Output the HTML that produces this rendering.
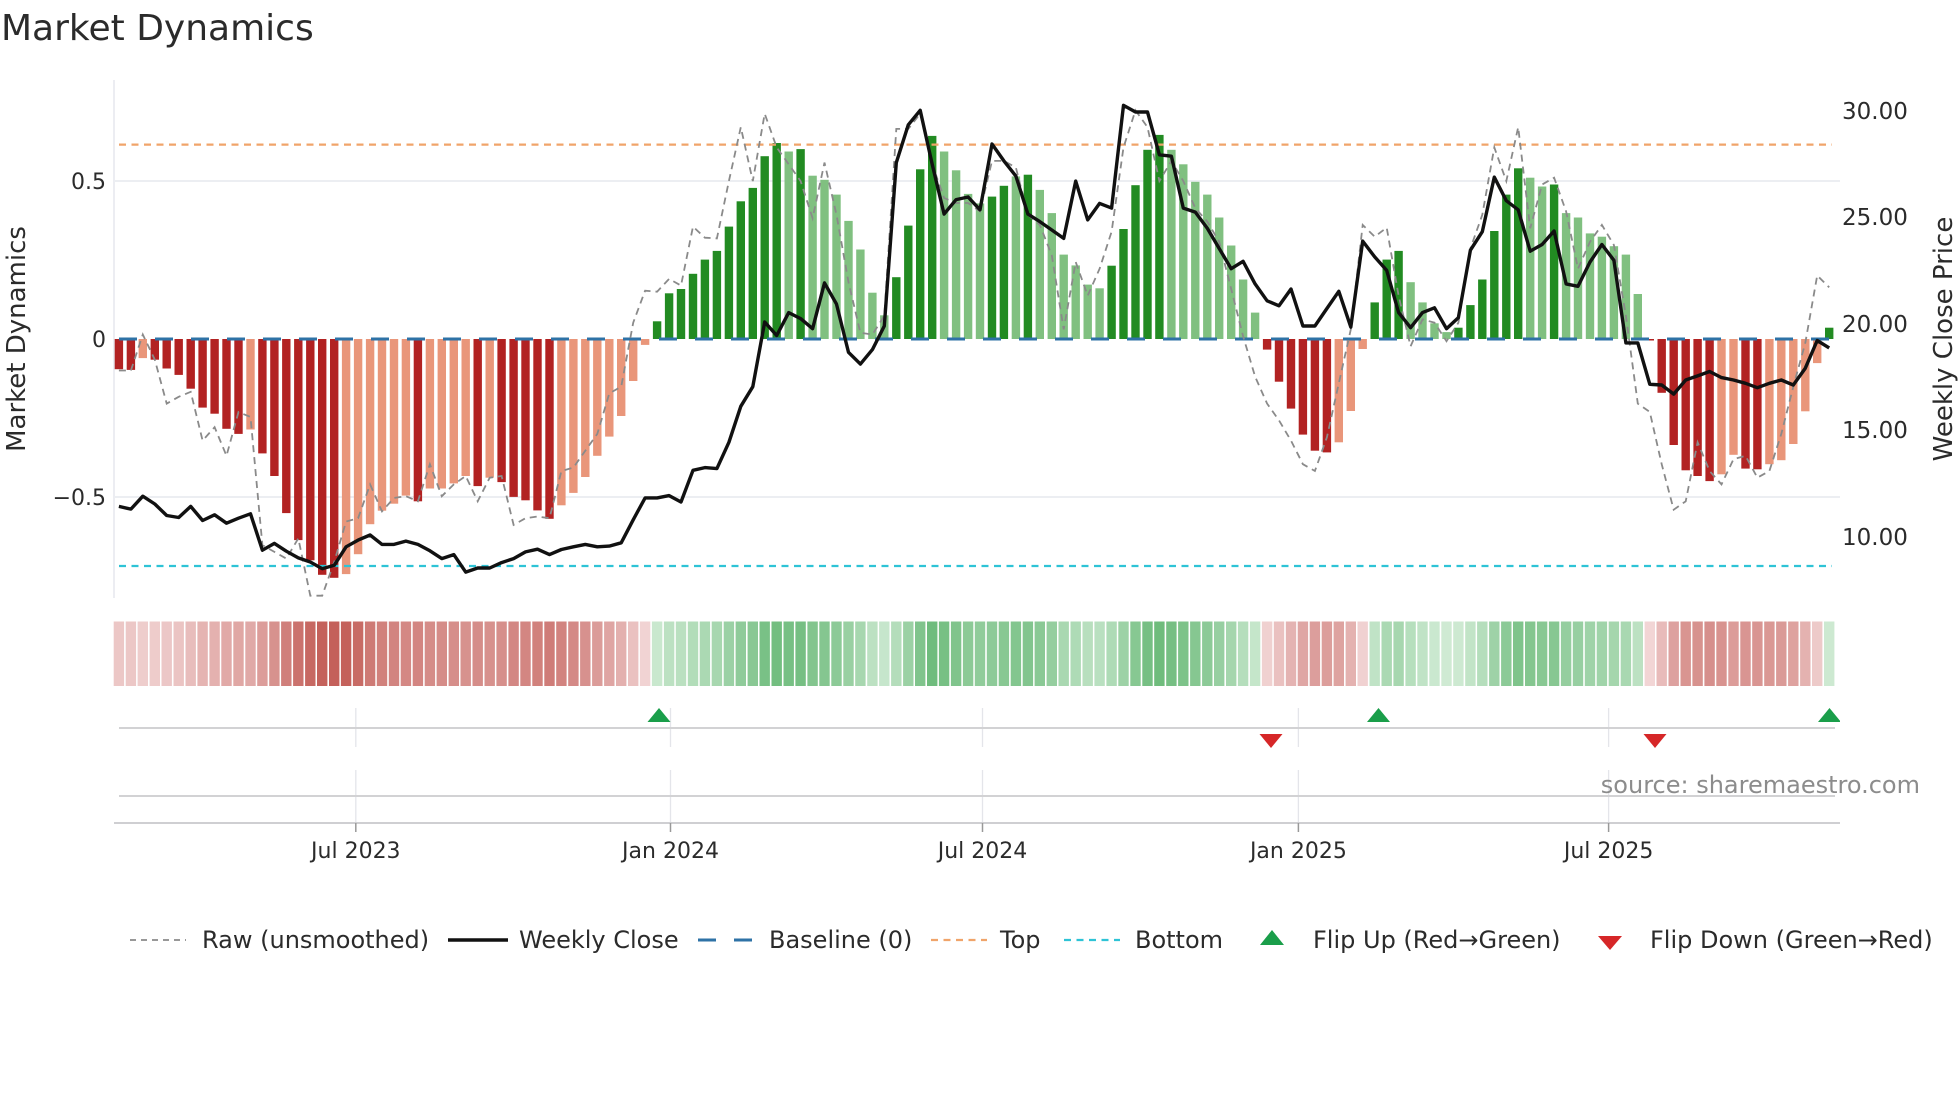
<!DOCTYPE html>
<html><head><meta charset="utf-8"><style>
html,body{margin:0;padding:0;background:#fff;}
svg{display:block;}
text{font-family:"DejaVu Sans","Liberation Sans",sans-serif;fill:#2b2b2b;}
</style></head><body>
<svg id="s" xmlns="http://www.w3.org/2000/svg" width="1960" height="1102" viewBox="0 0 1960 1102">
<rect width="1960" height="1102" fill="#fff"/>
<text x="1" y="40" font-size="36" fill="#333">Market Dynamics</text>
<line x1="114" y1="80" x2="114" y2="598" stroke="#e6e7ee" stroke-width="1.5"/>
<line x1="114" y1="181" x2="1840" y2="181" stroke="#eceef2" stroke-width="2"/>
<line x1="114" y1="497" x2="1840" y2="497" stroke="#eceef2" stroke-width="2"/>
<g id="bars"></g>
<line x1="119" y1="144.6" x2="1832" y2="144.6" stroke="#f0a46a" stroke-width="2.2" stroke-dasharray="7,5.5"/>
<line x1="119" y1="566" x2="1832" y2="566" stroke="#2ec3d6" stroke-width="2.2" stroke-dasharray="7,5.5"/>
<line x1="119" y1="339" x2="1840" y2="339" stroke="#2e72a6" stroke-width="3" stroke-dasharray="18,18"/>
<polyline id="raw" fill="none" stroke="#8a8a8a" stroke-width="1.8" stroke-dasharray="7,5"/>
<polyline id="close" fill="none" stroke="#111" stroke-width="3.4" stroke-linejoin="round"/>
<text x="106" y="189" font-size="22" text-anchor="end">0.5</text>
<text x="106" y="347" font-size="22" text-anchor="end">0</text>
<text x="106" y="505" font-size="22" text-anchor="end">−0.5</text>
<text transform="translate(25,339) rotate(-90)" font-size="26" text-anchor="middle">Market Dynamics</text>
<text x="1842" y="119" font-size="23">30.00</text>
<text x="1842" y="225" font-size="23">25.00</text>
<text x="1842" y="332" font-size="23">20.00</text>
<text x="1842" y="438" font-size="23">15.00</text>
<text x="1842" y="545" font-size="23">10.00</text>
<text transform="translate(1952,339) rotate(-90)" font-size="26" text-anchor="middle">Weekly Close Price</text>
<g id="heat"></g>
<g stroke="#e4e5ea" stroke-width="1.3">
<line x1="355.8" y1="708" x2="355.8" y2="747"/><line x1="670.5" y1="708" x2="670.5" y2="747"/><line x1="982.5" y1="708" x2="982.5" y2="747"/><line x1="1298.4" y1="708" x2="1298.4" y2="747"/><line x1="1608.6" y1="708" x2="1608.6" y2="747"/>
<line x1="355.8" y1="770" x2="355.8" y2="822"/><line x1="670.5" y1="770" x2="670.5" y2="822"/><line x1="982.5" y1="770" x2="982.5" y2="822"/><line x1="1298.4" y1="770" x2="1298.4" y2="822"/><line x1="1608.6" y1="770" x2="1608.6" y2="822"/>
</g>
<line x1="119" y1="728" x2="1835" y2="728" stroke="#d2d2d4" stroke-width="2"/>
<line x1="119" y1="796" x2="1835" y2="796" stroke="#d2d2d4" stroke-width="2"/>
<line x1="114" y1="823" x2="1840" y2="823" stroke="#cfcfd2" stroke-width="2"/>
<g stroke="#999" stroke-width="1.5">
<line x1="355.8" y1="823" x2="355.8" y2="832"/><line x1="670.5" y1="823" x2="670.5" y2="832"/><line x1="982.5" y1="823" x2="982.5" y2="832"/><line x1="1298.4" y1="823" x2="1298.4" y2="832"/><line x1="1608.6" y1="823" x2="1608.6" y2="832"/>
</g>
<polygon points="647.5,722 670.5,722 659,708" fill="#1a9e4a"/>
<polygon points="1367,722 1390,722 1378.5,708" fill="#1a9e4a"/>
<polygon points="1818,722 1841,722 1829.5,708" fill="#1a9e4a"/>
<rect x="1840" y="700" width="10" height="30" fill="#fff"/>
<polygon points="1259.5,734 1282.5,734 1271,748" fill="#d62728"/>
<polygon points="1643.5,734 1666.5,734 1655,748" fill="#d62728"/>
<text x="1920" y="793" font-size="24" text-anchor="end" style="fill:#8c8c8c">source: sharemaestro.com</text>
<text x="355.8" y="858" font-size="22" text-anchor="middle">Jul 2023</text>
<text x="670.5" y="858" font-size="22" text-anchor="middle">Jan 2024</text>
<text x="982.5" y="858" font-size="22" text-anchor="middle">Jul 2024</text>
<text x="1298.4" y="858" font-size="22" text-anchor="middle">Jan 2025</text>
<text x="1608.6" y="858" font-size="22" text-anchor="middle">Jul 2025</text>
<line x1="130" y1="940" x2="186" y2="940" stroke="#8a8a8a" stroke-width="1.8" stroke-dasharray="6,5"/>
<text x="202" y="948" font-size="24">Raw (unsmoothed)</text>
<line x1="448" y1="940" x2="508" y2="940" stroke="#111" stroke-width="3.4"/>
<text x="519" y="948" font-size="24">Weekly Close</text>
<line x1="698" y1="940" x2="752" y2="940" stroke="#2e72a6" stroke-width="3" stroke-dasharray="18,18"/>
<text x="769" y="948" font-size="24">Baseline (0)</text>
<line x1="931" y1="940" x2="987" y2="940" stroke="#f0a46a" stroke-width="2.2" stroke-dasharray="7,5.5"/>
<text x="1000" y="948" font-size="24">Top</text>
<line x1="1064" y1="940" x2="1120" y2="940" stroke="#2ec3d6" stroke-width="2.2" stroke-dasharray="7,5.5"/>
<text x="1135" y="948" font-size="24">Bottom</text>
<polygon points="1260,945 1284,945 1272,930" fill="#1a9e4a"/>
<text x="1313" y="948" font-size="24">Flip Up (Red→Green)</text>
<polygon points="1598,936 1622,936 1610,950" fill="#d62728"/>
<text x="1650" y="948" font-size="24">Flip Down (Green→Red)</text>
</svg>
<script>
(function(){
var NS="http://www.w3.org/2000/svg";
var B="858D,860D,825L,830D,856D,875D,916D,972D,990D,1035D,1050D,1037L,1108D,1175D,1285D,1365D,1425D,1468D,1477D,1466L,1407L,1318L,1278L,1257L,1233L,1250D,1212L,1212L,1197L,1175L,1205D,1180L,1193D,1237D,1247D,1277D,1302D,1262L,1225L,1178L,1115L,1058L,997L,893L,786L,"+
"716G,633G,620G,575G,533G,507G,435G,360G,320G,226G,187G,212l,205G,284l,296l,340l,418l,503l,631l,698l,585G,432G,265G,166G,212l,268l,338l,366l,346G,314G,286l,281G,326l,395l,518l,550l,607l,618l,551G,442G,312G,207G,163G,207l,250l,302l,340l,408l,491l,"+
"592l,690l,800D,895D,975D,1052D,1100D,1105D,1075L,982L,798L,660G,533G,507G,600l,660l,722l,748l,735G,668G,592G,448G,340G,262G,290l,316l,310G,395l,408l,455l,465l,493l,518l,635l,772D,928D,1083D,1158D,1175D,1190D,1170L,1112L,1153D,1155D,1140L,1128L,1080L,983L,840L,735G";
var C=[1265,1273,1235,1258,1292,1298,1265,1307,1290,1315,1300,1287,1395,1375,1398,1418,1430,1450,1440,1385,1365,1350,1378,1378,1368,1378,1397,1420,1408,1460,1448,1448,1432,1420,1400,1392,1408,1393,1385,1378,1385,1383,1373,1305,1240,
1240,1233,1252,1158,1150,1153,1075,968,910,718,758,690,708,738,602,665,808,843,800,730,245,133,90,250,398,355,347,385,190,240,285,398,420,445,470,300,415,366,380,75,95,95,222,226,380,392,440,500,560,
538,605,655,670,620,730,730,678,627,733,478,525,565,690,735,690,676,738,705,505,450,288,358,385,508,488,448,605,612,540,488,535,780,780,903,905,932,890,878,865,883,890,900,913,900,890,905,855,773,795];
var R=[862,862,755,830,960,940,925,1070,1030,1115,985,1000,1380,1400,1420,1360,1530,1530,1430,1310,1300,1200,1280,1240,1235,1250,1140,1235,1200,1175,1250,1180,1175,1320,1300,1295,1300,1160,1150,1100,1050,930,910,720,625,
628,590,610,435,468,470,300,140,300,100,200,250,300,410,245,400,600,750,755,700,145,145,100,250,350,365,365,390,240,240,260,400,430,520,740,540,640,560,450,200,90,140,300,240,300,380,420,480,620,
760,880,960,1010,1070,1140,1160,1060,900,740,430,465,438,640,790,710,720,775,720,500,400,200,300,140,440,310,290,390,560,480,430,490,700,960,985,1140,1275,1250,1075,1160,1200,1125,1115,1180,1160,1050,910,780,580,615];
function Y(z){return 80+z/2.967;}
function X(i){return 118.9+11.96*i;}
var col={D:"#b22222",L:"#e9967a",G:"#228b22",l:"#80c080"};
var bars=document.getElementById("bars"),heat=document.getElementById("heat");
B.split(",").forEach(function(s,i){
 var z=parseFloat(s),t=s.slice(-1),y=Y(z),x=X(i);
 var r=document.createElementNS(NS,"rect");
 var y0=Math.min(y,339),h=Math.abs(y-339);
 if(h<1.5)h=1.5;
 r.setAttribute("x",(x-4.2).toFixed(1));r.setAttribute("y",y0.toFixed(1));
 r.setAttribute("width","8.4");r.setAttribute("height",h.toFixed(1));
 r.setAttribute("fill",col[t]);bars.appendChild(r);
 var v=(768.5-z)/937.6,k=Math.min(1,Math.abs(v)/0.75),c;
 if(v<0){c=[242-46*k,214-118*k,214-124*k];}else{c=[210-115*k,236-56*k,214-104*k];}
 var q=document.createElementNS(NS,"rect");
 q.setAttribute("x",(x-5.2).toFixed(1));q.setAttribute("y","621.5");
 q.setAttribute("width","10.4");q.setAttribute("height","64.5");
 q.setAttribute("fill","rgb("+c.map(Math.round).join(",")+")");heat.appendChild(q);
});
function pl(id,a){document.getElementById(id).setAttribute("points",a.map(function(z,i){return X(i).toFixed(1)+","+Y(z).toFixed(1);}).join(" "));}
pl("raw",R);pl("close",C);
})();
</script>
</body></html>
